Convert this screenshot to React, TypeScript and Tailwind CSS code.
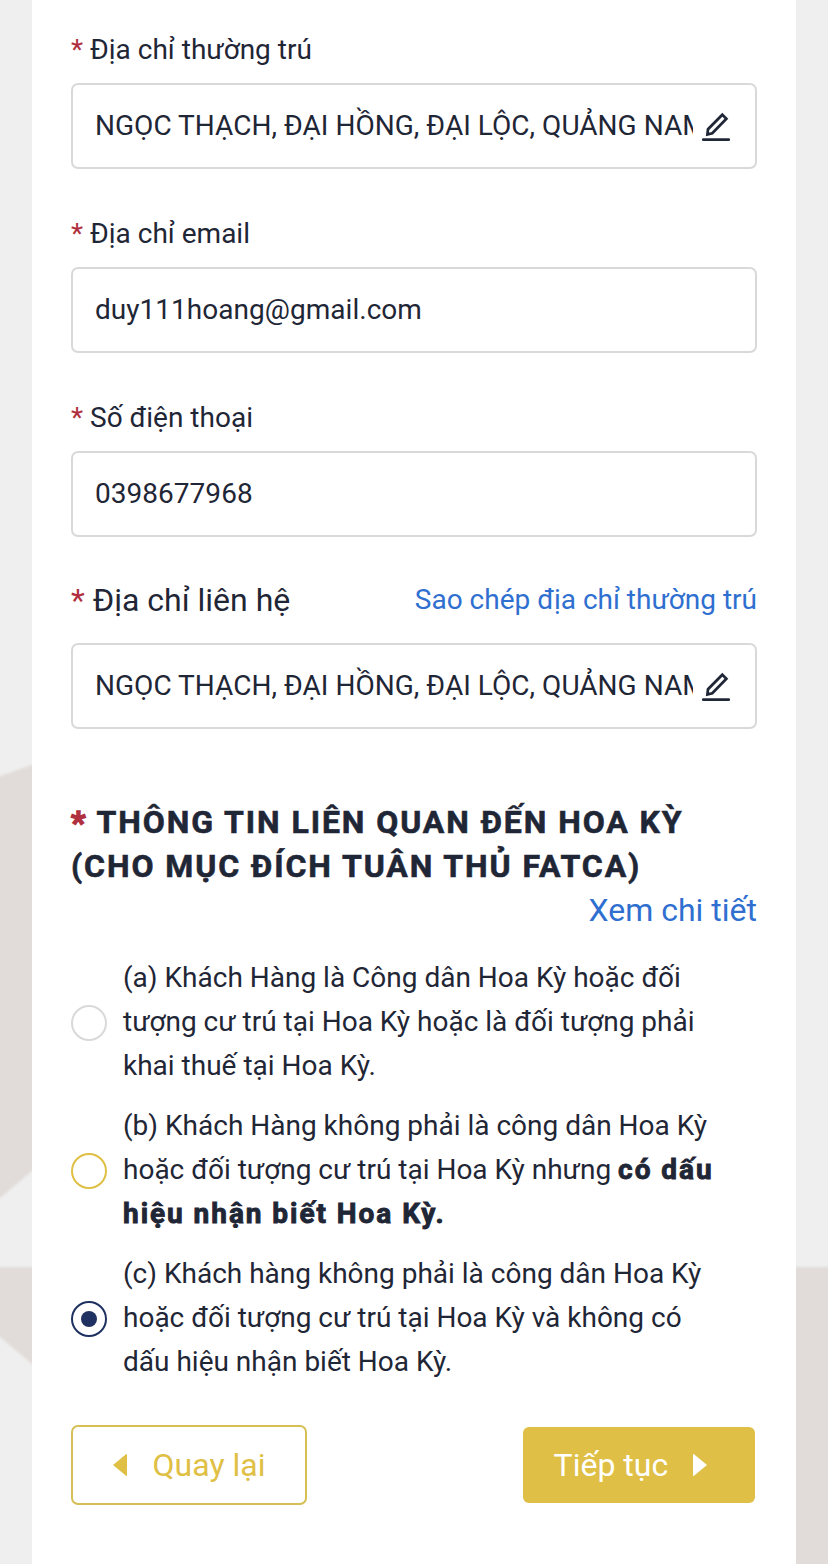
import type { ReactNode } from "react";

function Star() {
  return <span className="text-[#b0303f]">* </span>;
}

function EditIcon() {
  return (
    <svg className="h-[30px] w-7 shrink-0" viewBox="0 0 28 30" fill="none" stroke="#1f2636" strokeWidth="2.7">
      <path d="M5.4 23.4L6 18.2L20.3 3.7L24.4 7.8L10.3 22.3Z" />
      <path d="M1.2 28.6H26.8" strokeLinecap="round" />
    </svg>
  );
}

function Field({ value, editable = false }: { value: string; editable?: boolean }) {
  return (
    <div className="flex h-[86px] items-center rounded-[7px] border-2 border-[#d9d9d9] bg-white pr-[25px] pl-[22px]">
      <div className="min-w-0 flex-1 overflow-hidden text-[28px] leading-[44px] tracking-[0.03px] whitespace-nowrap">{value}</div>
      {editable && (
        <div className="ml-[9px] flex">
          <EditIcon />
        </div>
      )}
    </div>
  );
}

function Label({ children }: { children: ReactNode }) {
  return (
    <div className="mb-[11px] h-[44px] text-[28px] leading-[44px] whitespace-nowrap">
      <Star />
      {children}
    </div>
  );
}

function Option({ ring, checked = false, children }: { ring: string; checked?: boolean; children: ReactNode }) {
  return (
    <div className="flex items-center gap-4">
      <span className={`mt-0.5 flex size-9 shrink-0 items-center justify-center rounded-full border-2 bg-white ${ring}`}>
        {checked && <span className="size-4 rounded-full bg-[#1f3160]" />}
      </span>
      <p className="text-[28px] leading-[44px] whitespace-nowrap">{children}</p>
    </div>
  );
}

export default function App() {
  return (
    <div className="relative h-[1564px] w-[828px] overflow-hidden bg-[#efefef] px-8 font-['Roboto',sans-serif] text-[#1f2636]">
      <svg className="absolute inset-0 overflow-visible blur-[1px]" width="828" height="1564" fill="#e1dcd9">
        <path d="M-8 778.7L0 776L32 765H40V1164L32 1171L0 1198L-8 1204Z" />
        <path d="M-8 1267H40V1370L32 1364L0 1337L-8 1330Z" />
        <path d="M790 1267H836V1572H790Z" />
      </svg>
      <main className="relative h-full bg-white px-[39px] pt-[28px]">
        <Label>Địa chỉ thường trú</Label>
        <Field value="NGỌC THẠCH, ĐẠI HỒNG, ĐẠI LỘC, QUẢNG NAM" editable />
        <div className="h-[43px]" />
        <Label>Địa chỉ email</Label>
        <Field value="duy111hoang@gmail.com" />
        <div className="h-[43px]" />
        <Label>Số điện thoại</Label>
        <Field value="0398677968" />
        <div className="mt-[41px] mb-[21px] flex h-[44px] items-center justify-between whitespace-nowrap">
          <div className="text-[32px] leading-[44px]">
            <Star />
            Địa chỉ liên hệ
          </div>
          <a className="text-[28px] leading-[44px] text-[#2f6fd0]">Sao chép địa chỉ thường trú</a>
        </div>
        <Field value="NGỌC THẠCH, ĐẠI HỒNG, ĐẠI LỘC, QUẢNG NAM" editable />
        <h2 className="mt-[71px] text-[32px] leading-[44px] font-bold tracking-[1.92px] whitespace-nowrap [-webkit-text-stroke:0.6px]">
          <span className="[-webkit-text-stroke:1.6px_#b0303f]">
            <Star />
          </span>
          THÔNG TIN LIÊN QUAN ĐẾN HOA KỲ
          <br />
          (CHO MỤC ĐÍCH TUÂN THỦ FATCA)
        </h2>
        <div className="text-right text-[32px] leading-[44px] text-[#2f6fd0]">Xem chi tiết</div>
        <div className="mt-6 flex flex-col gap-4">
          <Option ring="border-[#d9d9d9]">
            (a) Khách Hàng là Công dân Hoa Kỳ hoặc đối
            <br />
            tượng cư trú tại Hoa Kỳ hoặc là đối tượng phải
            <br />
            khai thuế tại Hoa Kỳ.
          </Option>
          <Option ring="border-[#dfc045]">
            (b) Khách Hàng không phải là công dân Hoa Kỳ
            <br />
            hoặc đối tượng cư trú tại Hoa Kỳ nhưng{" "}
            <b className="tracking-[1.95px] [-webkit-text-stroke:0.9px]">có dấu</b>
            <br />
            <b className="tracking-[1.95px] [-webkit-text-stroke:0.9px]">hiệu nhận biết Hoa Kỳ.</b>
          </Option>
          <Option ring="border-[#1f3160]" checked>
            (c) Khách hàng không phải là công dân Hoa Kỳ
            <br />
            hoặc đối tượng cư trú tại Hoa Kỳ và không có
            <br />
            dấu hiệu nhận biết Hoa Kỳ.
          </Option>
        </div>
        <div className="mt-[41px] flex items-center justify-between pr-0.5 text-[32px]">
          <button className="flex h-20 w-[236px] items-center rounded-[7px] border-2 border-[#d6c055] bg-white pl-10 text-[#dfc045]">
            <svg className="mr-[24.6px] h-6 w-[15px]" viewBox="0 0 15 24" fill="currentColor">
              <path d="M0 12L13 1.2Q14 .6 14 1.6V22.4Q14 23.4 13 22.8Z" />
            </svg>
            Quay lại
          </button>
          <button className="flex h-[76px] w-[232px] items-center rounded-[6px] bg-[#dfbf45] pl-[30.6px] text-white">
            Tiếp tục
            <svg className="ml-[23.4px] h-6 w-[15px]" viewBox="0 0 15 24" fill="currentColor">
              <path d="M15 12L2 1.2Q1 .6 1 1.6V22.4Q1 23.4 2 22.8Z" />
            </svg>
          </button>
        </div>
      </main>
    </div>
  );
}
